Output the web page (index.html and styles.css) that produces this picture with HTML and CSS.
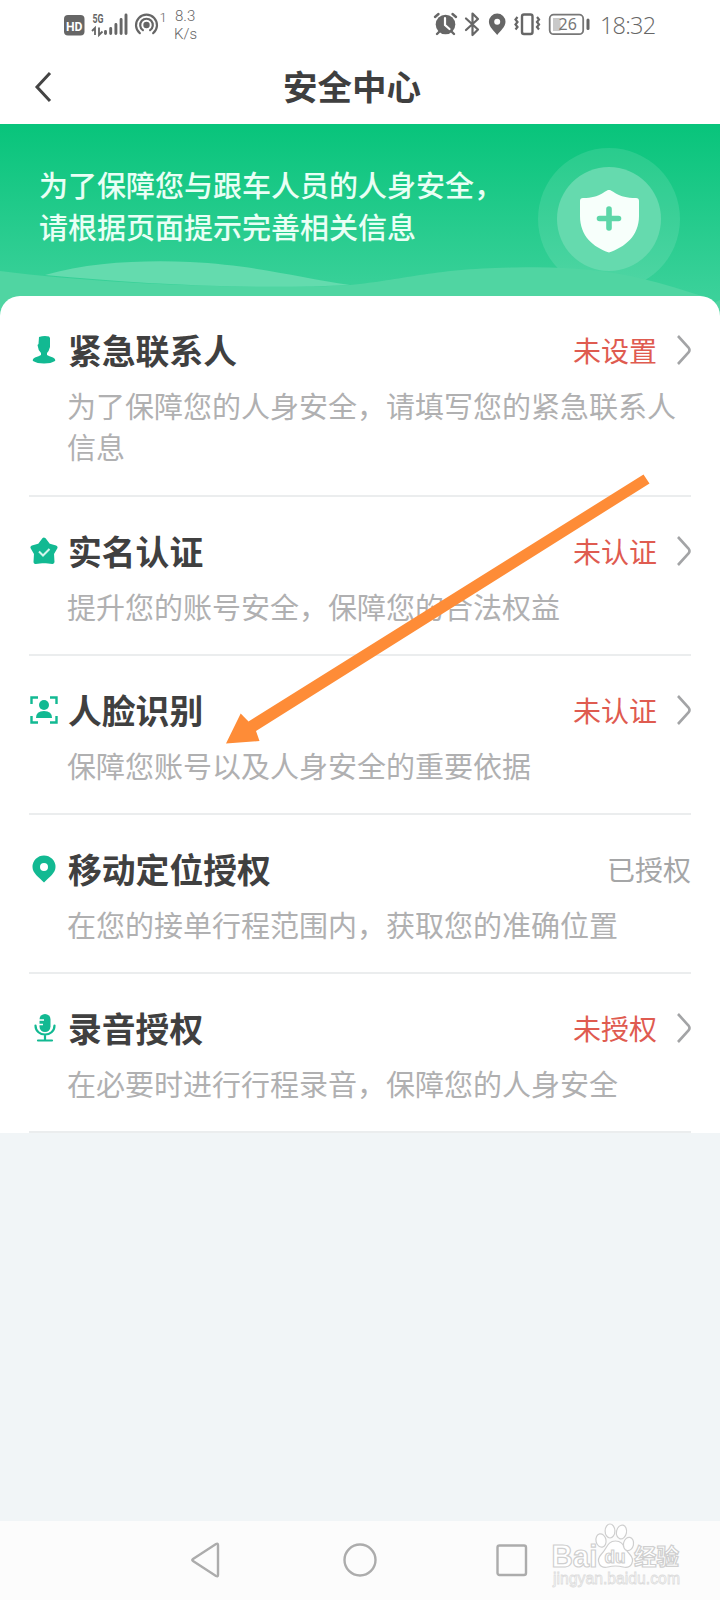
FILE: index.html
```html
<!DOCTYPE html>
<html lang="zh-CN">
<head>
<meta charset="utf-8">
<title>安全中心</title>
<link rel="stylesheet" href="styles.css">
</head>
<body>
<div class="screen">
  <header class="status-bar">
    <svg class="status-left" width="106" height="50" viewBox="60 0 106 50">
      <rect x="64" y="15" width="20.500" height="20.500" rx="4" fill="#666"/>
      <text x="66" y="30.500" class="hd" textLength="16.500" lengthAdjust="spacingAndGlyphs">HD</text>
      <text x="92.500" y="22.500" class="g5" textLength="11" lengthAdjust="spacingAndGlyphs">5G</text>
      <path d="M92 31l3-3V35M99 27.500V35l3.500-3.500" fill="none" stroke="#666" stroke-width="1.800"/>
      <path d="M105.500 31.500v2M110.700 28.500v5M115.900 24.500v9M121.100 19.500v14M126 15v18.500" stroke="#666" stroke-width="2.900" stroke-linecap="round"/>
      <circle cx="146.500" cy="25" r="3.200" fill="#666"/>
      <path d="M142.900 30.200A6.300 6.300 0 1 1 150.100 30.200M139.800 33.200A10.500 10.500 0 1 1 153.200 33.200" fill="none" stroke="#666" stroke-width="2.200" stroke-linecap="round"/>
      <text x="159.500" y="21.500" class="one">1</text>
    </svg>
    <div class="speed"><span>8.3</span><span>K/s</span></div>
    <svg class="status-right" width="170" height="50" viewBox="430 0 170 50">
      <circle cx="445.500" cy="24.500" r="9.800" fill="#666"/>
      <path d="M445 18v7l4.500 4" fill="none" stroke="#fff" stroke-width="2.200" stroke-linecap="round"/>
      <path d="M435 17l3.500-3M456 17l-3.500-3M439 32l-2 2M452 32l2 2" stroke="#666" stroke-width="2.400" stroke-linecap="round"/>
      <path d="M466 18.500l12 11-5.500 5.500V13.500L478 19l-12 11" fill="none" stroke="#666" stroke-width="2.200" stroke-linejoin="round" stroke-linecap="round"/>
      <path fill-rule="evenodd" d="M497.200 13.500a8.300 8.300 0 0 0-8.300 8.300c0 5 5.300 9.500 8.300 13.200 3-3.700 8.300-8.200 8.300-13.200a8.300 8.300 0 0 0-8.300-8.300zm0 5.300a3 3 0 1 1 0 6 3 3 0 0 1 0-6z" fill="#666"/>
      <rect x="522" y="14.500" width="10.500" height="19.500" rx="2" fill="none" stroke="#666" stroke-width="2.400"/>
      <path d="M517.500 17l-2 2.500 2 2.500-2 2.500 2 2.500-2 2.500M537 17l2 2.500-2 2.500 2 2.500-2 2.500 2 2.500" fill="none" stroke="#666" stroke-width="2.200"/>
      <rect x="549.700" y="14.700" width="33.500" height="19.500" rx="4" fill="none" stroke="#777" stroke-width="1.800"/>
      <rect x="553" y="18" width="7.500" height="13" fill="#c9c9c9"/>
      <text x="558.500" y="30" class="battery">26</text>
      <path d="M588 20v8.500" stroke="#666" stroke-width="3" stroke-linecap="round"/>
    </svg>
    <span class="clock">18:32</span>
  </header>

  <nav class="title-bar">
    <svg class="back" width="20" height="32" viewBox="0 0 20 32"><path d="M17 2L4 16l13 14" fill="none" stroke="#444" stroke-width="3"/></svg>
    <h1 class="page-title">安全中心</h1>
  </nav>

  <section class="banner">
    <svg class="banner-art" width="720" height="192" viewBox="0 0 720 192">
      <circle cx="609" cy="95" r="71" fill="#fff" fill-opacity=".11"/>
      <path d="M0 147C110 161 270 166 350 161C405 156 430 145 515 143.500C610 141 650 156 702 172L712 180L720 176V192H0z" fill="#50d5a2"/>
      <path d="M45 151C90 138 145 136 190 138C255 141 300 154 350 161C250 166 140 160 45 151z" fill="#64dbae"/>
      <circle cx="609" cy="95" r="52" fill="#65daae"/>
      <path d="M609 66C613 66 617 74 636 74Q639 74 639 77V92C639 112 625 123 609 128.500C593 123 580 112 580 92V77Q580 74 583 74C601 74 605 66 609 66z" fill="#f7fffb"/>
      <path d="M609 85v19M599.500 94.500h19" stroke="#5dd6a8" stroke-width="5.600" stroke-linecap="round"/>
    </svg>
    <p class="banner-text">为了保障您与跟车人员的人身安全，<br>请根据页面提示完善相关信息</p>
  </section>

  <main class="card">
    <section class="item">
      <div class="item-head">
        <svg class="icon" viewBox="0 0 28 28"><path d="M9 1Q14-.5 19 .5L20 2V11Q19 15 17 17V19Q19 20 23 21.500Q26 23 25 25Q21 27.500 14 27.500T3 25Q2 23 5 21.500Q9 20 11 19V17Q8 14 7.500 9L8.500 8z" fill="#12b992"/></svg>
        <h2>紧急联系人</h2><span class="state warn">未设置</span>
        <svg class="chevron" viewBox="0 0 14 30"><path d="M1 1L11.500 12.500Q13.500 15 11.500 17.500L1 29"/></svg>
      </div>
      <p>为了保障您的人身安全，请填写您的紧急联系人信息</p>
    </section>
    <section class="item">
      <div class="item-head">
        <svg class="icon" viewBox="0 0 28 28"><path d="M14 2.500L18.500 8.500L25.500 10.500L22 16.500L22.500 25L14 24L5.500 25L6 16.500L2.500 10.500L9.500 8.500z" fill="#12b992" stroke="#12b992" stroke-width="4" stroke-linejoin="round"/><path d="M9 14.500l4 4 6.500-6.500" fill="none" stroke="#d2f5ec" stroke-width="2"/></svg>
        <h2>实名认证</h2><span class="state warn">未认证</span>
        <svg class="chevron" viewBox="0 0 14 30"><path d="M1 1L11.500 12.500Q13.500 15 11.500 17.500L1 29"/></svg>
      </div>
      <p>提升您的账号安全，保障您的合法权益</p>
    </section>
    <section class="item">
      <div class="item-head">
        <svg class="icon" viewBox="0 0 28 28"><path d="M1.500 8V1.500H8M20 1.500h6.500V8M26.500 20v6.500H20M8 26.500H1.500V20" fill="none" stroke="#12b992" stroke-width="2.400"/><circle cx="14" cy="9" r="5" fill="#12b992"/><path d="M6 22Q6 15 14 15t8 7z" fill="#12b992"/></svg>
        <h2>人脸识别</h2><span class="state warn">未认证</span>
        <svg class="chevron" viewBox="0 0 14 30"><path d="M1 1L11.500 12.500Q13.500 15 11.500 17.500L1 29"/></svg>
      </div>
      <p>保障您账号以及人身安全的重要依据</p>
    </section>
    <section class="item">
      <div class="item-head">
        <svg class="icon" viewBox="0 0 28 28"><path fill-rule="evenodd" d="M14 .5A11.500 11.500 0 0 0 2.500 12c0 6 6 10 11.500 15.500C19.500 22 25.500 18 25.500 12A11.500 11.500 0 0 0 14 .5zm0 7.500a4 4 0 1 1 0 8 4 4 0 0 1 0-8z" fill="#12b992"/></svg>
        <h2>移动定位授权</h2><span class="state">已授权</span>
      </div>
      <p>在您的接单行程范围内，获取您的准确位置</p>
    </section>
    <section class="item">
      <div class="item-head">
        <svg class="icon" viewBox="0 0 28 28"><rect x="9.500" y="0" width="11" height="18" rx="5.500" fill="#12b992"/><path d="M9 6h5M9 10.500h4" stroke="#fff" stroke-width="1.500"/><path d="M5.500 11.500c0 12 19 12 19 0M15 21v5M8 26.500h14" fill="none" stroke="#12b992" stroke-width="2.200" stroke-linecap="round"/></svg>
        <h2>录音授权</h2><span class="state warn">未授权</span>
        <svg class="chevron" viewBox="0 0 14 30"><path d="M1 1L11.500 12.500Q13.500 15 11.500 17.500L1 29"/></svg>
      </div>
      <p>在必要时进行行程录音，保障您的人身安全</p>
    </section>
  </main>

  <footer class="system-nav">
    <svg viewBox="0 0 36 40"><path d="M3 19Q1.500 20 3 21L26 36Q28 37 28 35V5Q28 3 26 4z"/></svg>
    <svg viewBox="0 0 36 40"><circle cx="18" cy="20" r="15.500"/></svg>
    <svg viewBox="0 0 36 40"><rect x="3.500" y="5.500" width="28.500" height="29.500" rx="2"/></svg>
  </footer>

  <svg class="arrow" width="430" height="276" viewBox="223 471 430 276"><path d="M226 743.500L240.700 713.500L248.500 721.500L643.500 474.500L649.500 483.500L256 731L259.500 741z" fill="#fe8c37"/></svg>

  <svg class="watermark" width="140" height="76" viewBox="548 1520 140 76">
    <text x="551.500" y="1566.500" class="wm-big" textLength="46" lengthAdjust="spacingAndGlyphs">Bai</text>
    <path d="M615.500 1541C607 1541 607 1549 601.500 1554C595 1561 600 1569 608 1567Q615.500 1565 623 1567C631 1569 636 1561 629.500 1554C624 1549 624 1541 615.500 1541z"/>
    <ellipse cx="601" cy="1540.500" rx="5" ry="6.700" transform="rotate(-12 601 1540.500)"/>
    <ellipse cx="610" cy="1531" rx="4.900" ry="7"/>
    <ellipse cx="621.500" cy="1532" rx="5" ry="7" transform="rotate(12 621.500 1532)"/>
    <ellipse cx="628.500" cy="1544" rx="5" ry="6.700" transform="rotate(12 628.500 1544)"/>
    <text x="604.500" y="1563" class="wm-du" textLength="21" lengthAdjust="spacingAndGlyphs">du</text>
    <text x="634" y="1564.500" class="wm-cn">经验</text>
    <text x="553" y="1584" class="wm-url" textLength="127" lengthAdjust="spacingAndGlyphs">jingyan.baidu.com</text>
  </svg>
</div>
</body>
</html>
```
FILE: styles.css
```css
* { box-sizing: border-box; margin: 0; padding: 0; }
body { background: #f1f5f7; font-family: KaiTi, "Noto Sans CJK SC", sans-serif; }
svg { display: block; flex: none; }
.screen { position: relative; width: 720px; height: 1600px; display: flex; flex-direction: column; background: #f1f5f7; overflow: hidden; }

.status-bar { height: 50px; display: flex; align-items: center; padding: 0 64px 0 60px; background: #fff; color: #666; }
.hd { font: 700 13.500px Roboto, sans-serif; fill: #fff; }
.g5 { font: 700 12.500px Roboto, sans-serif; fill: #666; }
.one { font: 300 13px Roboto, sans-serif; fill: #666; }
.battery { font: 400 16px "Noto Sans", sans-serif; fill: #777; }
.speed { display: flex; flex-direction: column; margin-left: 8px; font: 300 15px/18px Roboto, sans-serif; }
.speed span:first-child { padding-left: 1px; }
.status-right { margin-left: auto; }
.clock { width: 56px; font: 300 23.500px/48px "Open Sans", sans-serif; letter-spacing: -.8px; white-space: nowrap; }

.title-bar { height: 74px; display: grid; grid-template-columns: 60px 1fr 60px; align-items: center; padding: 0 48px 0 32px; background: #fff; }
.page-title { text-align: center; font-size: 34.500px; font-weight: 700; color: #3f3f3f; line-height: 70px; height: 74px; }
.back { margin-left: 1px; }

.banner { position: relative; height: 192px; padding: 40px 0 0 39px; background: linear-gradient(#08c47b, #3bd19a 172px); }
.banner-art { position: absolute; left: 0; top: 0; }
.banner-text { position: relative; font-size: 29px; line-height: 41.500px; font-weight: 500; color: #e9fff5; white-space: nowrap; }

.card { position: relative; margin-top: -20px; padding: 0 29px; border-radius: 20px 20px 0 0; background: #fff; }
.item { padding: 33px 0 27px; border-bottom: 2px solid #ebedee; }
.item:first-child { padding-bottom: 28px; }
.item-head { display: flex; align-items: center; height: 42px; }
.icon { width: 28px; height: 28px; margin: 0 10px 0 1px; }
.item h2 { font-size: 33.800px; line-height: 42px; font-weight: 700; color: #404040; }
.state { margin-left: auto; font-size: 28px; line-height: 42px; color: #a5a6a7; }
.warn { color: #df5b50; }
.chevron { width: 14px; height: 30px; margin-left: 20px; fill: none; stroke: #a3a4a6; stroke-width: 2.600; }
.item p { margin: 14px 0 0 38px; font-size: 29px; line-height: 41px; color: #b0b0b1; }

.system-nav { margin-top: auto; height: 79px; display: flex; justify-content: center; gap: 116px; padding-top: 19px; background: #fcfcfc; }
.system-nav svg { width: 36px; height: 40px; overflow: visible; fill: none; stroke: #acacac; stroke-width: 2.400; }

.arrow { position: absolute; left: 223px; top: 471px; }
.watermark { position: absolute; left: 548px; top: 1520px; fill: #fff; stroke: #cfcfcf; stroke-width: 1.200; }
.wm-big { font: 700 31px "Liberation Sans", sans-serif; }
.wm-du { font: 700 19px "Liberation Sans", sans-serif; }
.wm-cn { font: 700 22.500px "Noto Sans CJK SC", sans-serif; }
.wm-url { font: 400 16px "Liberation Sans", sans-serif; stroke: #dcdcdc; stroke-width: .8; }
```
